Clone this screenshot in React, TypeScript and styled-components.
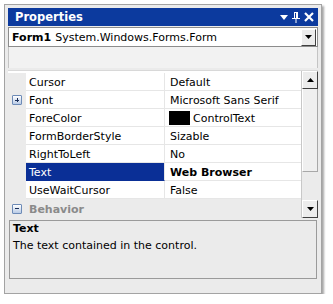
import React from 'react'
import styled, { createGlobalStyle } from 'styled-components'

const GlobalStyle = createGlobalStyle`
  body {
    margin: 0;
    background: #ffffff;
    font-family: "DejaVu Sans", Verdana, sans-serif;
    font-size: 11px;
  }
`

const Window = styled.div`
  margin: 4px 0 0 4px;
  width: 310px;
  height: 282px;
  padding: 3px;
  background: #ebebeb;
  border: 1px solid #a3a3a3;
  box-shadow: 2px 2px 2px rgba(0, 0, 0, 0.35);
  display: flex;
  flex-direction: column;
`

const TitleBar = styled.div`
  height: 18px;
  background: #0c3a9e;
  color: #ffffff;
  font-weight: bold;
  font-size: 11.5px;
  display: flex;
  align-items: center;
  padding: 0 4px 0 7px;
`

const Title = styled.div`
  flex: 1;
`

const TitleIcons = styled.div`
  display: flex;
  align-items: center;
  gap: 4px;
`

const Combo = styled.div`
  margin-top: 1px;
  height: 18px;
  background: #ffffff;
  border: 1px solid #8c8c8c;
  display: flex;
  align-items: center;
  padding-left: 3px;
  color: #000;
`

const ComboText = styled.div`
  flex: 1;
  white-space: nowrap;
  b {
    margin-right: 4px;
  }
`

const DropButton = styled.div`
  width: 13px;
  height: 15px;
  margin-right: 1px;
  background: #ececec;
  border-right: 1px solid #404040;
  border-bottom: 1px solid #404040;
  border-top: 1px solid #ffffff;
  border-left: 1px solid #ffffff;
  display: flex;
  align-items: center;
  justify-content: center;
`

const Toolbar = styled.div`
  height: 21px;
  background: #f2f2f2;
  border: 1px solid #c4c4c4;
  border-top: none;
  border-bottom: none;
`

const GridArea = styled.div`
  margin-top: 2px;
  display: flex;
  background: #ffffff;
  border-top: 1px solid #d8d8d8;
`

const Grid = styled.div`
  flex: 1;
  display: flex;
  flex-direction: column;
  padding-top: 2px;
`

const Row = styled.div`
  display: flex;
  height: 18px;
`

const Margin = styled.div`
  width: 18px;
  background: #ebebeb;
  display: flex;
  align-items: center;
  justify-content: center;
`

const NameCell = styled.div<{ $selected?: boolean }>`
  width: 135px;
  padding: 1px 0 0 3px;
  display: flex;
  align-items: center;
  border-bottom: 1px solid ${p => (p.$selected ? '#0a2f96' : '#e6e6e6')};
  border-right: 1px solid #e6e6e6;
  background: ${p => (p.$selected ? '#0a2f96' : '#ffffff')};
  color: ${p => (p.$selected ? '#ffffff' : '#000000')};
  white-space: nowrap;
`

const ValueCell = styled.div<{ $bold?: boolean }>`
  flex: 1;
  padding: 1px 0 0 5px;
  display: flex;
  align-items: center;
  gap: 3px;
  border-bottom: 1px solid #e6e6e6;
  font-weight: ${p => (p.$bold ? 'bold' : 'normal')};
  white-space: nowrap;
`

const Swatch = styled.span`
  width: 21px;
  height: 14px;
  margin: -1px 0 0 -1px;
  background: #000000;
`

const CategoryRow = styled.div`
  height: 19px;
  background: #ebebeb;
  display: flex;
  align-items: center;
`

const CategoryLabel = styled.div`
  font-weight: bold;
  color: #8a8a8a;
  padding: 1px 0 0 3px;
`

const ExpandBox = styled.div<{ $open?: boolean }>`
  width: 8px;
  height: 8px;
  border: 1px solid #6d8bb7;
  border-radius: 1px;
  background: linear-gradient(#ffffff, #b9cbe6);
  position: relative;
  &::before {
    content: '';
    position: absolute;
    left: 2px;
    top: 3.5px;
    width: 4px;
    height: 1px;
    background: #1a2f5a;
  }
  &::after {
    content: '';
    position: absolute;
    left: 3.5px;
    top: 2px;
    width: 1px;
    height: 4px;
    background: #1a2f5a;
    display: ${p => (p.$open ? 'none' : 'block')};
  }
`

const ScrollBar = styled.div`
  width: 16px;
  display: flex;
  flex-direction: column;
  background: #ebebeb;
  border-left: 1px solid #c8c8c8;
`

const ScrollButton = styled.div`
  height: 16px;
  background: #ececec;
  border-top: 1px solid #ffffff;
  border-left: 1px solid #ffffff;
  border-right: 1px solid #404040;
  border-bottom: 1px solid #404040;
  display: flex;
  align-items: center;
  justify-content: center;
`

const Thumb = styled.div`
  height: 82px;
  background: #efefef;
  border-right: 1px solid #a8a8a8;
  border-bottom: 1px solid #a8a8a8;
  border-left: 1px solid #ffffff;
`

const Track = styled.div`
  flex: 1;
`

const Description = styled.div`
  margin: 2px 1px 0 1px;
  height: 57px;
  border: 1px solid #9a9a9a;
  background: #ebebeb;
  padding: 0 3px;
`

const DescTitle = styled.div`
  font-weight: bold;
  line-height: 14px;
  padding-top: 1px;
`

const DescText = styled.div`
  margin-top: 3px;
  line-height: 14px;
`

const Arrow = ({ up }: { up?: boolean }) => (
  <svg width="7" height="4" viewBox="0 0 7 4">
    <path d={up ? 'M0 4 L3.5 0 L7 4 Z' : 'M0 0 L7 0 L3.5 4 Z'} fill="#000" />
  </svg>
)

const rows: { name: string; value: string; bold?: boolean; swatch?: boolean; expand?: boolean; selected?: boolean }[] = [
  { name: 'Cursor', value: 'Default' },
  { name: 'Font', value: 'Microsoft Sans Serif', expand: true },
  { name: 'ForeColor', value: 'ControlText', swatch: true },
  { name: 'FormBorderStyle', value: 'Sizable' },
  { name: 'RightToLeft', value: 'No' },
  { name: 'Text', value: 'Web Browser', bold: true, selected: true },
  { name: 'UseWaitCursor', value: 'False' },
]

export default function App() {
  return (
    <>
      <GlobalStyle />
      <Window>
        <TitleBar>
          <Title>Properties</Title>
          <TitleIcons>
            <svg width="8" height="5" viewBox="0 0 8 5">
              <path d="M0 0 L8 0 L4 5 Z" fill="#fff" />
            </svg>
            <svg width="8" height="11" viewBox="0 0 8 11">
              <path d="M2 0 H6 V6 H8 V7 H4.5 V11 H3.5 V7 H0 V6 H2 Z M3 1 V6 H4 V1 Z" fill="#fff" />
            </svg>
            <svg width="10" height="10" viewBox="0 0 10 10">
              <path d="M1 1 L9 9 M9 1 L1 9" stroke="#fff" strokeWidth="2.2" />
            </svg>
          </TitleIcons>
        </TitleBar>
        <Combo>
          <ComboText>
            <b>Form1</b>System.Windows.Forms.Form
          </ComboText>
          <DropButton>
            <Arrow />
          </DropButton>
        </Combo>
        <Toolbar />
        <GridArea>
          <Grid>
            {rows.map(r => (
              <Row key={r.name}>
                <Margin>{r.expand && <ExpandBox />}</Margin>
                <NameCell $selected={r.selected}>{r.name}</NameCell>
                <ValueCell $bold={r.bold}>
                  {r.swatch && <Swatch />}
                  {r.value}
                </ValueCell>
              </Row>
            ))}
            <CategoryRow>
              <Margin>
                <ExpandBox $open />
              </Margin>
              <CategoryLabel>Behavior</CategoryLabel>
            </CategoryRow>
          </Grid>
          <ScrollBar>
            <ScrollButton>
              <Arrow up />
            </ScrollButton>
            <Thumb />
            <Track />
            <ScrollButton>
              <Arrow />
            </ScrollButton>
          </ScrollBar>
        </GridArea>
        <Description>
          <DescTitle>Text</DescTitle>
          <DescText>The text contained in the control.</DescText>
        </Description>
      </Window>
    </>
  )
}
